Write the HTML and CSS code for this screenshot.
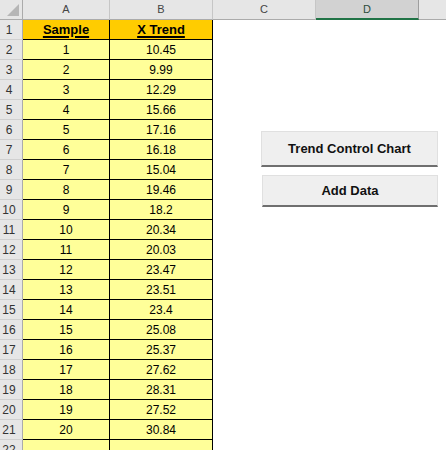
FILE: index.html
```html
<!DOCTYPE html>
<html>
<head>
<meta charset="utf-8">
<link rel="stylesheet" href="styles.css">
</head>
<body>
<div class="wrap">
  <div class="sheet">
    <div class="corner"><span class="tri"></span></div>
    <div class="ch">A</div><div class="ch">B</div><div class="ch">C</div><div class="ch sel">D</div><div class="ch last"></div>

    <div class="rh">1</div><div class="c hd"><u>Sample</u></div><div class="c hd"><u>X Trend</u></div><div class="e"></div><div class="e"></div><div class="e"></div>
    <div class="rh">2</div><div class="c">1</div><div class="c">10.45</div><div class="e"></div><div class="e"></div><div class="e"></div>
    <div class="rh">3</div><div class="c">2</div><div class="c">9.99</div><div class="e"></div><div class="e"></div><div class="e"></div>
    <div class="rh">4</div><div class="c">3</div><div class="c">12.29</div><div class="e"></div><div class="e"></div><div class="e"></div>
    <div class="rh">5</div><div class="c">4</div><div class="c">15.66</div><div class="e"></div><div class="e"></div><div class="e"></div>
    <div class="rh">6</div><div class="c">5</div><div class="c">17.16</div><div class="e"></div><div class="e"></div><div class="e"></div>
    <div class="rh">7</div><div class="c">6</div><div class="c">16.18</div><div class="e"></div><div class="e"></div><div class="e"></div>
    <div class="rh">8</div><div class="c">7</div><div class="c">15.04</div><div class="e"></div><div class="e"></div><div class="e"></div>
    <div class="rh">9</div><div class="c">8</div><div class="c">19.46</div><div class="e"></div><div class="e"></div><div class="e"></div>
    <div class="rh">10</div><div class="c">9</div><div class="c">18.2</div><div class="e"></div><div class="e"></div><div class="e"></div>
    <div class="rh">11</div><div class="c">10</div><div class="c">20.34</div><div class="e"></div><div class="e"></div><div class="e"></div>
    <div class="rh">12</div><div class="c">11</div><div class="c">20.03</div><div class="e"></div><div class="e"></div><div class="e"></div>
    <div class="rh">13</div><div class="c">12</div><div class="c">23.47</div><div class="e"></div><div class="e"></div><div class="e"></div>
    <div class="rh">14</div><div class="c">13</div><div class="c">23.51</div><div class="e"></div><div class="e"></div><div class="e"></div>
    <div class="rh">15</div><div class="c">14</div><div class="c">23.4</div><div class="e"></div><div class="e"></div><div class="e"></div>
    <div class="rh">16</div><div class="c">15</div><div class="c">25.08</div><div class="e"></div><div class="e"></div><div class="e"></div>
    <div class="rh">17</div><div class="c">16</div><div class="c">25.37</div><div class="e"></div><div class="e"></div><div class="e"></div>
    <div class="rh">18</div><div class="c">17</div><div class="c">27.62</div><div class="e"></div><div class="e"></div><div class="e"></div>
    <div class="rh">19</div><div class="c">18</div><div class="c">28.31</div><div class="e"></div><div class="e"></div><div class="e"></div>
    <div class="rh">20</div><div class="c">19</div><div class="c">27.52</div><div class="e"></div><div class="e"></div><div class="e"></div>
    <div class="rh">21</div><div class="c">20</div><div class="c">30.84</div><div class="e"></div><div class="e"></div><div class="e"></div>
    <div class="rh">22</div><div class="c"></div><div class="c"></div><div class="e"></div><div class="e"></div><div class="e"></div>
  </div>
  <button class="btn btn-chart">Trend Control Chart</button>
  <button class="btn btn-add">Add Data</button>
</div>
</body>
</html>
```
FILE: styles.css
```css
html, body {
  margin: 0;
  padding: 0;
  background: #ffffff;
  overflow: hidden;
}
.wrap {
  position: relative;
  width: 446px;
  height: 450px;
  overflow: hidden;
}
.sheet {
  display: grid;
  grid-template-columns: 23px 87px 103px 103px 103px 1fr;
  grid-auto-rows: 20px;
  font-family: "Liberation Sans", Arial, sans-serif;
}
.corner {
  position: relative;
  background: #e6e6e6;
  border-right: 1px solid #ababab;
  border-bottom: 1px solid #ababab;
}
.tri {
  position: absolute;
  right: 3px;
  bottom: 3px;
  width: 0;
  height: 0;
  border-left: 12px solid transparent;
  border-bottom: 12px solid #b6b6b6;
}
.ch {
  background: #e6e6e6;
  border-right: 1px solid #c6c6c6;
  border-bottom: 1px solid #ababab;
  display: flex;
  align-items: center;
  justify-content: center;
  font-size: 11px;
  color: #444;
  padding-bottom: 1px;
}
.ch.sel {
  background: #d2d2d2;
  border-right-color: #9e9e9e;
  border-bottom: 2px solid #217346;
  color: #2b4d3a;
}
.ch.last {
  border-right: none;
}
.rh {
  background: #e6e6e6;
  border-right: 1px solid #ababab;
  border-bottom: 1px solid #d0d0d0;
  display: flex;
  align-items: center;
  justify-content: center;
  font-size: 12px;
  color: #333;
  padding-right: 4px;
}
.c {
  background: #ffff99;
  border-right: 1px solid #000;
  border-bottom: 1px solid #000;
  display: flex;
  align-items: center;
  justify-content: center;
  font-size: 12px;
  color: #000;
}
.c.hd {
  background: #ffcc00;
  font-size: 13px;
  font-weight: bold;
}
.c.hd u {
  text-decoration-thickness: 1.5px;
  text-underline-offset: 2px;
}
.e {
  background: #fff;
}
.btn {
  position: absolute;
  margin: 0;
  padding: 0;
  background: #efefef;
  border: 1px solid #e0e0e0;
  border-bottom: 2px solid #6f6f6f;
  font-family: "Liberation Sans", Arial, sans-serif;
  font-weight: bold;
  font-size: 13px;
  color: #111;
  box-sizing: border-box;
}
.btn-chart {
  left: 261px;
  top: 131px;
  width: 177px;
  height: 36px;
}
.btn-add {
  left: 262px;
  top: 175px;
  width: 176px;
  height: 32px;
}
```
